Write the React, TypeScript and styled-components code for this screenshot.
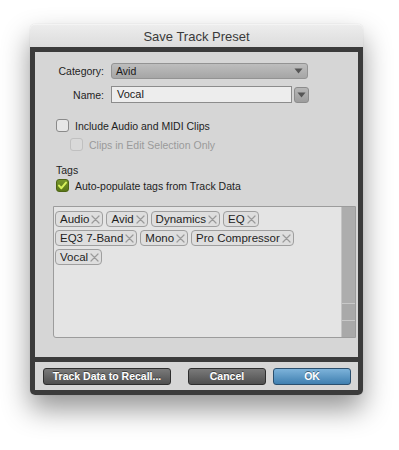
import styled, { createGlobalStyle } from "styled-components";

const GlobalStyle = createGlobalStyle`
    html, body {
        margin: 0;
        padding: 0;
        background: #ffffff;
    }
    body {
        font-family: "Liberation Sans", Arial, sans-serif;
    }
`;

const tags = ["Audio", "Avid", "Dynamics", "EQ", "EQ3 7-Band", "Mono", "Pro Compressor", "Vocal"];

const CheckIcon = () => (
    <svg width="11" height="11" viewBox="0 0 11 11">
        <path d="M2 5.6 L4.4 8.2 L9 2.6" fill="none" stroke="#d8f25c" strokeWidth="2" strokeLinecap="round" strokeLinejoin="round" />
    </svg>
);

const Arrow = () => (
    <svg width="9" height="6" viewBox="0 0 9 6">
        <path d="M0.5 0.5 H8.5 L4.5 5.5 Z" fill="#555" />
    </svg>
);

const RemoveIcon = () => (
    <svg width="9" height="9" viewBox="0 0 9 9">
        <path d="M1 1 L8 8 M8 1 L1 8" stroke="#9a9a9a" strokeWidth="1.2" strokeLinecap="round" />
    </svg>
);

const App = () => {
    return (
        <>
            <GlobalStyle />
            <Page>
                <Window>
                    <TitleBar>Save Track Preset</TitleBar>
                    <Frame>
                        <Panel>
                            <FormRow>
                                <Label>Category:</Label>
                                <Select>
                                    <span>Avid</span>
                                    <Arrow />
                                </Select>
                            </FormRow>
                            <FormRow>
                                <Label>Name:</Label>
                                <TextField>Vocal</TextField>
                                <ComboButton>
                                    <Arrow />
                                </ComboButton>
                            </FormRow>

                            <Options>
                                <CheckRow>
                                    <Box />
                                    <CheckText>Include Audio and MIDI Clips</CheckText>
                                </CheckRow>
                                <CheckRow $indent>
                                    <Box $disabled />
                                    <CheckText $disabled>Clips in Edit Selection Only</CheckText>
                                </CheckRow>
                            </Options>

                            <TagsSection>
                                <SectionTitle>Tags</SectionTitle>
                                <CheckRow>
                                    <Box $checked>
                                        <CheckIcon />
                                    </Box>
                                    <CheckText>Auto-populate tags from Track Data</CheckText>
                                </CheckRow>
                            </TagsSection>

                            <TagArea>
                                <TagList>
                                    {tags.map((t) => (
                                        <Tag key={t}>
                                            {t}
                                            <RemoveIcon />
                                        </Tag>
                                    ))}
                                </TagList>
                                <ScrollBar>
                                    <Track />
                                    <ScrollButton />
                                    <ScrollButton />
                                </ScrollBar>
                            </TagArea>
                        </Panel>
                        <ButtonRow>
                            <Button $width={128}>Track Data to Recall...</Button>
                            <Spacer />
                            <Button $width={78}>Cancel</Button>
                            <Button $width={78} $primary>
                                OK
                            </Button>
                        </ButtonRow>
                    </Frame>
                </Window>
            </Page>
        </>
    );
};

export default App;

const Page = styled.div`
    padding: 24px 0 0 30px;
    height: 450px;
    box-sizing: border-box;
`;

const Window = styled.div`
    width: 333px;
    border-radius: 5px;
    box-shadow: 0 14px 28px rgba(0, 0, 0, 0.42), 0 0 1px rgba(0, 0, 0, 0.2);
`;

const TitleBar = styled.div`
    height: 23px;
    line-height: 23px;
    text-align: center;
    font-size: 13px;
    color: #3a3a3a;
    background: linear-gradient(#ededed, #dcdcdc);
    border-radius: 5px 5px 0 0;
    border-top: 1px solid #f4f4f4;
    box-sizing: border-box;
`;

const Frame = styled.div`
    background: #3b3b3b;
    padding: 5px;
    border-radius: 0 0 5px 5px;
    display: flex;
    flex-direction: column;
    gap: 5px;
`;

const Panel = styled.div`
    background: #d6d6d6;
    height: 305px;
    padding-top: 10px;
    box-sizing: border-box;
    display: flex;
    flex-direction: column;
`;

const FormRow = styled.div`
    display: flex;
    align-items: center;
    height: 17px;
    margin-bottom: 7px;
`;

const Label = styled.div`
    width: 69px;
    margin-right: 7px;
    text-align: right;
    font-size: 10.5px;
    color: #1e1e1e;
`;

const Select = styled.div`
    width: 197px;
    height: 16px;
    box-sizing: border-box;
    border: 1px solid #939393;
    border-radius: 3px;
    background: linear-gradient(#bdbdbd, #a6a6a6);
    display: flex;
    align-items: center;
    justify-content: space-between;
    padding: 0 4px;
    font-size: 10.5px;
    color: #1a1a1a;
`;

const TextField = styled.div`
    width: 181px;
    height: 17px;
    box-sizing: border-box;
    border: 1px solid #8c8c8c;
    background: #ededed;
    padding-left: 5px;
    font-size: 11px;
    line-height: 15px;
    color: #1a1a1a;
`;

const ComboButton = styled.div`
    width: 15px;
    height: 16px;
    margin-left: 2px;
    box-sizing: border-box;
    border: 1px solid #8c8c8c;
    border-radius: 3px;
    background: linear-gradient(#b7b7b7, #9d9d9d);
    display: flex;
    align-items: center;
    justify-content: center;
`;

const Options = styled.div`
    margin-top: 9px;
    display: flex;
    flex-direction: column;
    gap: 6px;
`;

const CheckRow = styled.div<{ $indent?: boolean }>`
    display: flex;
    align-items: center;
    gap: 6px;
    margin-left: ${(p) => (p.$indent ? 35 : 21)}px;
    height: 13px;
`;

const Box = styled.div<{ $checked?: boolean; $disabled?: boolean }>`
    width: 13px;
    height: 13px;
    box-sizing: border-box;
    border-radius: 3px;
    border: 1px solid ${(p) => (p.$checked ? "#4e6514" : p.$disabled ? "#c0c0c0" : "#8a8a8a")};
    background: ${(p) => (p.$checked ? "linear-gradient(#77962c, #5a7718)" : p.$disabled ? "#d9d9d9" : "#e6e6e6")};
    display: flex;
    align-items: center;
    justify-content: center;
`;

const CheckText = styled.span<{ $disabled?: boolean }>`
    font-size: 10.5px;
    color: ${(p) => (p.$disabled ? "#9a9a9a" : "#1e1e1e")};
`;

const TagsSection = styled.div`
    margin-top: 13px;
    display: flex;
    flex-direction: column;
    gap: 3px;
`;

const SectionTitle = styled.div`
    margin-left: 21px;
    font-size: 10.5px;
    color: #1e1e1e;
`;

const TagArea = styled.div`
    margin: 14px 2px 0 18px;
    height: 132px;
    box-sizing: border-box;
    border: 1px solid #9c9c9c;
    border-radius: 0 0 0 3px;
    background: #e4e4e4;
    display: flex;
`;

const TagList = styled.div`
    flex: 1;
    display: flex;
    flex-wrap: wrap;
    align-content: flex-start;
    gap: 3px;
    padding: 4px 6px 4px 1px;
`;

const Tag = styled.div`
    height: 16px;
    box-sizing: border-box;
    border: 1px solid #9f9f9f;
    border-radius: 4px;
    background: #dedede;
    padding: 0 2px 0 4px;
    display: flex;
    align-items: center;
    gap: 2px;
    font-size: 11.5px;
    color: #1e1e1e;
`;

const ScrollBar = styled.div`
    width: 13px;
    display: flex;
    flex-direction: column;
    background: #adadad;
    border-left: 1px solid #c4c4c4;
`;

const Track = styled.div`
    flex: 1;
`;

const ScrollButton = styled.div`
    height: 16px;
    border-top: 1px solid #c8c8c8;
    background: #a9a9a9;
`;

const ButtonRow = styled.div`
    background: #d6d6d6;
    height: 28px;
    display: flex;
    align-items: center;
    gap: 7px;
    padding: 0 7px 0 8px;
`;

const Spacer = styled.div`
    flex: 1;
`;

const Button = styled.div<{ $width: number; $primary?: boolean }>`
    width: ${(p) => p.$width}px;
    height: 17px;
    box-sizing: border-box;
    border-radius: 3px;
    border: 1px solid ${(p) => (p.$primary ? "#2a4f6e" : "#2e2e2e")};
    background: ${(p) => (p.$primary ? "linear-gradient(#7db3da, #3f7fb0)" : "linear-gradient(#7a7a7a, #4f4f4f)")};
    color: #ffffff;
    font-weight: 700;
    font-size: 10.5px;
    text-align: center;
    line-height: 15px;
    text-shadow: 0 -1px 0 rgba(0, 0, 0, 0.45);
`;
